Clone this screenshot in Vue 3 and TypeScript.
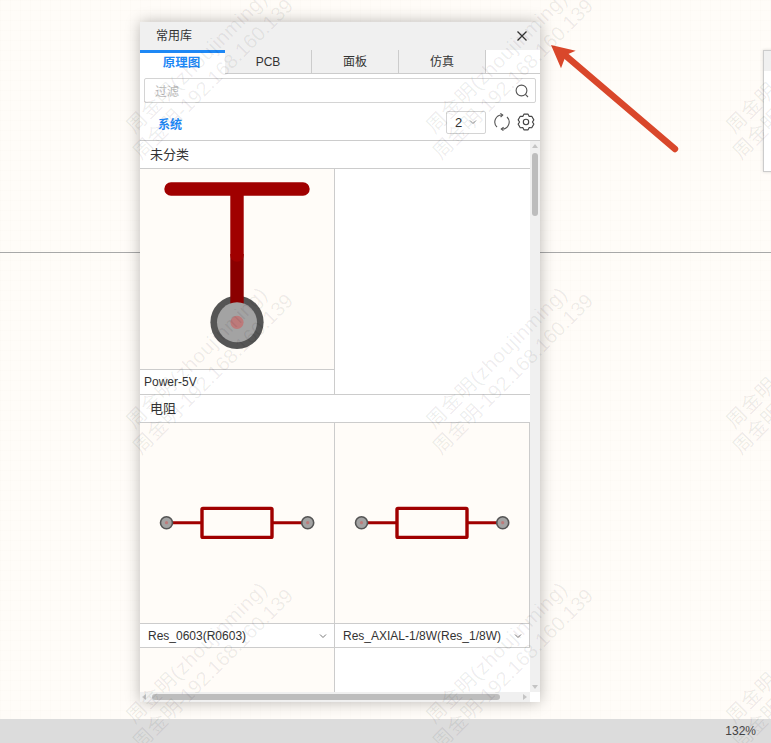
<script setup lang="ts">
const tabs = ['原理图', 'PCB', '面板', '仿真'];
const resistors = ['Res_0603(R0603)', 'Res_AXIAL-1/8W(Res_1/8W)'];

// watermark tiles repeat over the whole page
const marks: { x: number; y: number }[] = [];
for (const y of [70.5, 365.5, 660.5]) {
  for (const x of [204.5, 504.5, 804.5]) marks.push({ x, y });
}

// six lobed gear outline
const gearPath = (() => {
  const pts: string[] = [];
  for (let i = 0; i < 6; i++) {
    const a = (i * Math.PI) / 3 - Math.PI / 2;
    const at = (r: number, d: number) =>
      `${(12 + r * Math.cos(a + d)).toFixed(2)} ${(12 + r * Math.sin(a + d)).toFixed(2)}`;
    pts.push(at(8.6, -0.52), at(10.8, -0.26), at(10.8, 0.26), at(8.6, 0.52));
  }
  return 'M' + pts.join('L') + 'Z';
})();
</script>

<template>
  <div class="page">
    <div class="sheet">
      <div class="sheet-top"></div>
    </div>
    <div class="status">132%</div>

    <div class="side-panel"><div class="side-head"></div></div>

    <div class="panel">
      <div class="title">
        <span class="title-text">常用库</span>
        <svg class="close" width="12" height="12" viewBox="0 0 12 12">
          <path d="M1.5 1.5l9 9M10.5 1.5l-9 9" stroke="#333" stroke-width="1.3" fill="none" />
        </svg>
      </div>

      <div class="tabs">
        <div v-for="(t, i) in tabs" :key="t" class="tab" :class="{ active: i === 0 }">{{ t }}</div>
        <div class="tab-rest"></div>
      </div>

      <div class="search">
        <span class="placeholder">过滤</span>
        <svg width="14" height="14" viewBox="0 0 14 14" fill="none" stroke="#555" stroke-width="1.1">
          <circle cx="6.5" cy="6.5" r="5.4" />
          <path d="M10.4 10.4l2.6 2.6" />
        </svg>
      </div>

      <div class="toolbar">
        <span class="source">系统</span>
        <div class="select">
          <span>2</span>
          <svg width="8" height="6" viewBox="0 0 8 6" fill="none" stroke="#888" stroke-width="1">
            <path d="M1 1.5l3 3 3-3" />
          </svg>
        </div>
        <svg class="refresh" width="18" height="18" viewBox="0 0 18 18" fill="none" stroke="#555" stroke-width="1.1">
          <path d="M4 14A7 7 0 0 1 9.5 2" />
          <path d="M7.4 0.4L9.7 2L7.6 4" />
          <path d="M14 4A7 7 0 0 1 8.5 16" />
          <path d="M10.6 14.2L8.3 16L10.4 17.6" />
        </svg>
        <svg class="gear" width="18" height="18" viewBox="0 0 24 24" fill="none" stroke="#444" stroke-width="1.5" stroke-linejoin="round">
          <path :d="gearPath" />
          <circle cx="12" cy="12" r="3.6" />
        </svg>
      </div>

      <div class="list">
        <div class="content">
          <div class="group">未分类</div>
          <div class="row">
            <div class="cell">
              <div class="preview">
                <svg width="194" height="200" viewBox="0 0 194 200">
                  <circle cx="97" cy="153.3" r="26.6" fill="#555" />
                  <path d="M97 85V135" stroke="#8b0000" stroke-width="13.4" fill="none" />
                  <path d="M31 20H163M97 20V86" stroke="#a00000" stroke-width="13.4" stroke-linecap="round" fill="none" />
                  <circle cx="97" cy="153.3" r="20" fill="#a3a3a3" />
                  <circle cx="97" cy="153.3" r="6.6" fill="#bd7a7a" />
                </svg>
              </div>
              <div class="label first">Power-5V</div>
            </div>
            <div class="cell empty"></div>
          </div>

          <div class="group">电阻</div>
          <div class="row">
            <div v-for="r in resistors" :key="r" class="cell boxed">
              <div class="preview">
                <svg width="194" height="200" viewBox="0 0 194 200">
                  <path d="M27 99.7H62M132 99.7H167" stroke="#a00000" stroke-width="3" fill="none" />
                  <rect x="62" y="85.4" width="70" height="29" rx="1" fill="none" stroke="#a00000" stroke-width="3.4" />
                  <g fill="#a3a3a3" stroke="#555" stroke-width="1.6">
                    <circle cx="26.5" cy="99.7" r="6" />
                    <circle cx="167.7" cy="99.7" r="6" />
                  </g>
                  <g fill="#bd7a7a">
                    <circle cx="26.5" cy="99.7" r="1.6" />
                    <circle cx="167.7" cy="99.7" r="1.6" />
                  </g>
                </svg>
              </div>
              <div class="label option">
                <span>{{ r }}</span>
                <svg width="8" height="6" viewBox="0 0 8 6" fill="none" stroke="#777" stroke-width="1">
                  <path d="M1 1.5l3 3 3-3" />
                </svg>
              </div>
            </div>
          </div>

          <div class="row tail">
            <div class="cell"></div>
            <div class="cell empty"></div>
          </div>
        </div>

        <div class="vbar">
          <i class="arrow up"></i>
          <div class="vtrack"><div class="vthumb"></div></div>
          <i class="arrow down"></i>
        </div>
        <div class="hbar">
          <i class="arrow left"></i>
          <div class="htrack"><div class="hthumb"></div></div>
          <i class="arrow right"></i>
        </div>
      </div>
    </div>

    <svg class="pointer" width="771" height="743" viewBox="0 0 771 743">
      <path d="M675 149L566 56" stroke="#d9472b" stroke-width="6.4" stroke-linecap="round" fill="none" />
      <path d="M551 45L575.7 50.7L566 55L561 68.3Z" fill="#d9472b" />
    </svg>

    <div
      v-for="m in marks"
      :key="`${m.x}-${m.y}`"
      class="mark"
      :style="{ left: `${m.x}px`, top: `${m.y}px` }"
    >
      <span class="mark-name">周金明(zhoujinming)</span>
      <span>周金明-192.168.160.139</span>
    </div>
  </div>
</template>

<style>
html,
body {
  margin: 0;
  overflow: hidden;
}
</style>

<style scoped>
.page {
  position: relative;
  width: 771px;
  height: 743px;
  overflow: hidden;
  display: flex;
  flex-direction: column;
  font-family: "Liberation Sans", "Noto Sans CJK SC", sans-serif;
  font-size: 12px;
  color: #333;
}
.sheet {
  flex: 1;
  background-color: #fffcf8;
  background-image:
    linear-gradient(rgba(120, 90, 50, 0.012) 1px, transparent 1px),
    linear-gradient(90deg, rgba(120, 90, 50, 0.012) 1px, transparent 1px);
  background-size: 10px 10px;
}
.sheet-top {
  height: 252px;
  border-bottom: 1px solid #a8a8a8;
}
.status {
  height: 24px;
  line-height: 25px;
  background: #dcdcdc;
  text-align: right;
  padding-right: 15px;
  color: #444;
}
.side-panel {
  position: absolute;
  left: 763px;
  top: 50px;
  width: 40px;
  height: 120px;
  background: #fff;
  border: 1px solid #ccc;
  box-shadow: 0 0 3px rgba(0, 0, 0, 0.15);
}
.side-head {
  height: 20px;
  background: #f0f0f0;
}
.panel {
  position: absolute;
  left: 140px;
  top: 22px;
  width: 400px;
  height: 680px;
  background: #fff;
  box-shadow: 0 0 14px rgba(0, 0, 0, 0.28);
  display: flex;
  flex-direction: column;
}
.title {
  height: 28px;
  flex: none;
  background: #f0f0f0;
  display: flex;
  align-items: center;
  justify-content: space-between;
  padding: 0 12px 0 16px;
}
.title-text {
  margin-bottom: 4px;
}
.tabs {
  display: flex;
  height: 24px;
  flex: none;
}
.tab {
  width: 87px;
  box-sizing: border-box;
  background: #f0f0f0;
  border-right: 1px solid #ccc;
  border-bottom: 1px solid #ccc;
  text-align: center;
  line-height: 25px;
}
.tab.active {
  width: 85px;
  padding-right: 2px;
  background: #fff;
  color: #1e88f5;
  font-size: 12.5px;
  font-weight: 600;
  border-top: 3px solid #1e88f5;
  border-right: none;
  border-bottom: none;
  line-height: 21px;
}
.tab-rest {
  flex: 1;
  border-bottom: 1px solid #ccc;
}
.search {
  flex: none;
  height: 25px;
  margin: 4px 4px 0;
  box-sizing: border-box;
  border: 1px solid #d4d4d4;
  border-radius: 2px;
  display: flex;
  align-items: center;
  justify-content: space-between;
  padding: 0 6px 0 10px;
}
.placeholder {
  color: #bbb;
}
.toolbar {
  flex: none;
  height: 37px;
  box-sizing: border-box;
  padding: 1px 0 0 18px;
  display: flex;
  align-items: center;
}
.source {
  color: #1e88f5;
  font-weight: 600;
  margin: 2px auto 0 0;
}
.select {
  width: 40px;
  height: 23px;
  box-sizing: border-box;
  border: 1px solid #d4d4d4;
  border-radius: 2px;
  display: flex;
  align-items: center;
  gap: 7px;
  padding-left: 8px;
  font-size: 13px;
}
.refresh {
  margin-left: 7px;
}
.gear {
  margin: 0 5px 0 6px;
}
.list {
  flex: 1;
  min-height: 0;
  border-top: 1px solid #ccc;
  display: grid;
  grid-template-columns: 390px 10px;
  grid-template-rows: 1fr 10px;
}
.content {
  overflow: hidden;
  min-height: 0;
}
.group {
  height: 27px;
  line-height: 27px;
  padding-left: 10px;
  font-size: 13px;
  border-bottom: 1px solid #ccc;
}
.row {
  display: grid;
  grid-template-columns: 195px 195px;
}
.cell {
  box-sizing: border-box;
  border-right: 1px solid #ccc;
  border-bottom: 1px solid #ccc;
  background: #fff;
}
.cell.empty {
  border-right: none;
}
.preview {
  height: 200px;
  background: #fffcf8;
  border-bottom: 1px solid #ccc;
}
.preview svg {
  display: block;
}
.label {
  height: 23px;
  display: flex;
  align-items: center;
  justify-content: space-between;
  padding: 0 7px 0 8px;
}
.label.first {
  height: 24px;
  padding-left: 4px;
}
.tail {
  height: 44px;
}
.tail .cell {
  border-bottom: none;
  background: #fffcf8;
}
.tail .cell.empty {
  background: #fff;
}
.vbar {
  background: #f0f0f0;
  display: flex;
  flex-direction: column;
  align-items: center;
}
.vtrack {
  flex: 1;
  width: 100%;
}
.vthumb {
  width: 6px;
  height: 63px;
  margin: 5px 0 0 2px;
  background: #bdbdbd;
  border-radius: 3px;
}
.hbar {
  background: #f0f0f0;
  display: flex;
  align-items: center;
}
.htrack {
  flex: 1;
}
.hthumb {
  width: 348px;
  height: 6px;
  margin-left: 6px;
  background: #bdbdbd;
  border-radius: 3px;
}
.arrow {
  width: 0;
  height: 0;
  flex: none;
  border: 3px solid transparent;
}
.arrow.up {
  border-bottom: 4px solid #c4c4c4;
  border-top: none;
  margin-top: 3px;
}
.arrow.down {
  border-top: 4px solid #c4c4c4;
  border-bottom: none;
  margin-bottom: 3px;
}
.arrow.left {
  border-right: 4px solid #c4c4c4;
  border-left: none;
  margin-left: 2px;
}
.arrow.right {
  border-left: 4px solid #c4c4c4;
  border-right: none;
  margin-right: 3px;
}
.pointer {
  position: absolute;
  left: 0;
  top: 0;
  pointer-events: none;
}
.mark {
  position: absolute;
  transform: translate(-50%, -50%) rotate(-45deg);
  display: flex;
  flex-direction: column;
  align-items: center;
  white-space: nowrap;
  font-size: 20px;
  line-height: 23px;
  color: rgba(0, 0, 0, 0.07);
  pointer-events: none;
}
.mark-name {
  letter-spacing: 0.6px;
}
</style>
